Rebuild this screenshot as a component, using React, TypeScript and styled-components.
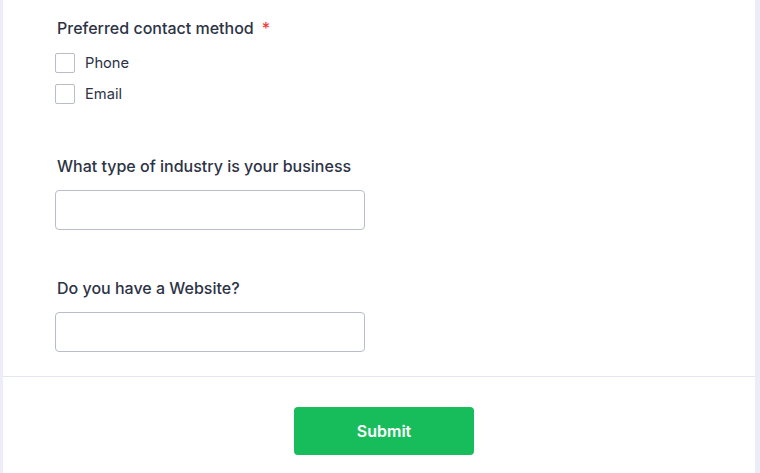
import React from "react";
import styled, { createGlobalStyle } from "styled-components";

const Global = createGlobalStyle`
  html, body { margin: 0; padding: 0; }
  body {
    background: #ecedf8;
    font-family: Inter, "Noto Sans", sans-serif;
    color: #2c3345;
  }
`;

const Card = styled.div`
  margin: 0 5px 0 3px;
  background: #ffffff;
  min-height: 473px;
`;

const FormBody = styled.div`
  padding: 18px 0 24px 52px;
  border-bottom: 1px solid #e3e5f3;
`;

const Field = styled.div<{ $top: number }>`
  margin-top: ${(p) => p.$top}px;
  display: flex;
  flex-direction: column;
  align-items: flex-start;
`;

const Label = styled.label`
  font-size: 16px;
  line-height: 21px;
  font-weight: 500;
  padding-left: 2px;
  margin-bottom: 13px;
  color: #2c3345;
`;

const Required = styled.span`
  color: #f23a3c;
  margin-left: 8px;
`;

const OptionList = styled.div`
  display: flex;
  flex-direction: column;
  gap: 11px;
  margin-top: 1px;
`;

const Option = styled.label`
  display: flex;
  align-items: center;
  gap: 10px;
  font-size: 14.7px;
  line-height: 20px;
  color: #2c3345;
`;

const Box = styled.span`
  width: 20px;
  height: 20px;
  box-sizing: border-box;
  border: 1px solid #b8bdc9;
  border-radius: 2px;
  background: #fff;
`;

const TextInput = styled.input`
  width: 310px;
  height: 40px;
  box-sizing: border-box;
  border: 1px solid #b8bdc9;
  border-radius: 4px;
  background: #fff;
  margin: 0;
  padding: 0 10px;
  font: inherit;
  outline: none;
`;

const Footer = styled.div`
  display: flex;
  justify-content: center;
  padding: 30px 0 0 10px;
`;

const SubmitButton = styled.button`
  width: 180px;
  height: 48px;
  border: none;
  border-radius: 4px;
  background: #18bd5b;
  color: #fff;
  font-family: Inter, "Noto Sans", sans-serif;
  font-size: 16px;
  font-weight: 600;
  cursor: pointer;
`;

export default function App() {
  return (
    <>
      <Global />
      <Card>
        <FormBody>
          <Field $top={0}>
            <Label>
              Preferred contact method<Required>*</Required>
            </Label>
            <OptionList>
              <Option>
                <Box />
                Phone
              </Option>
              <Option>
                <Box />
                Email
              </Option>
            </OptionList>
          </Field>
          <Field $top={52}>
            <Label>What type of industry is your business</Label>
            <TextInput type="text" />
          </Field>
          <Field $top={48}>
            <Label>Do you have a Website?</Label>
            <TextInput type="text" />
          </Field>
        </FormBody>
        <Footer>
          <SubmitButton>Submit</SubmitButton>
        </Footer>
      </Card>
    </>
  );
}
